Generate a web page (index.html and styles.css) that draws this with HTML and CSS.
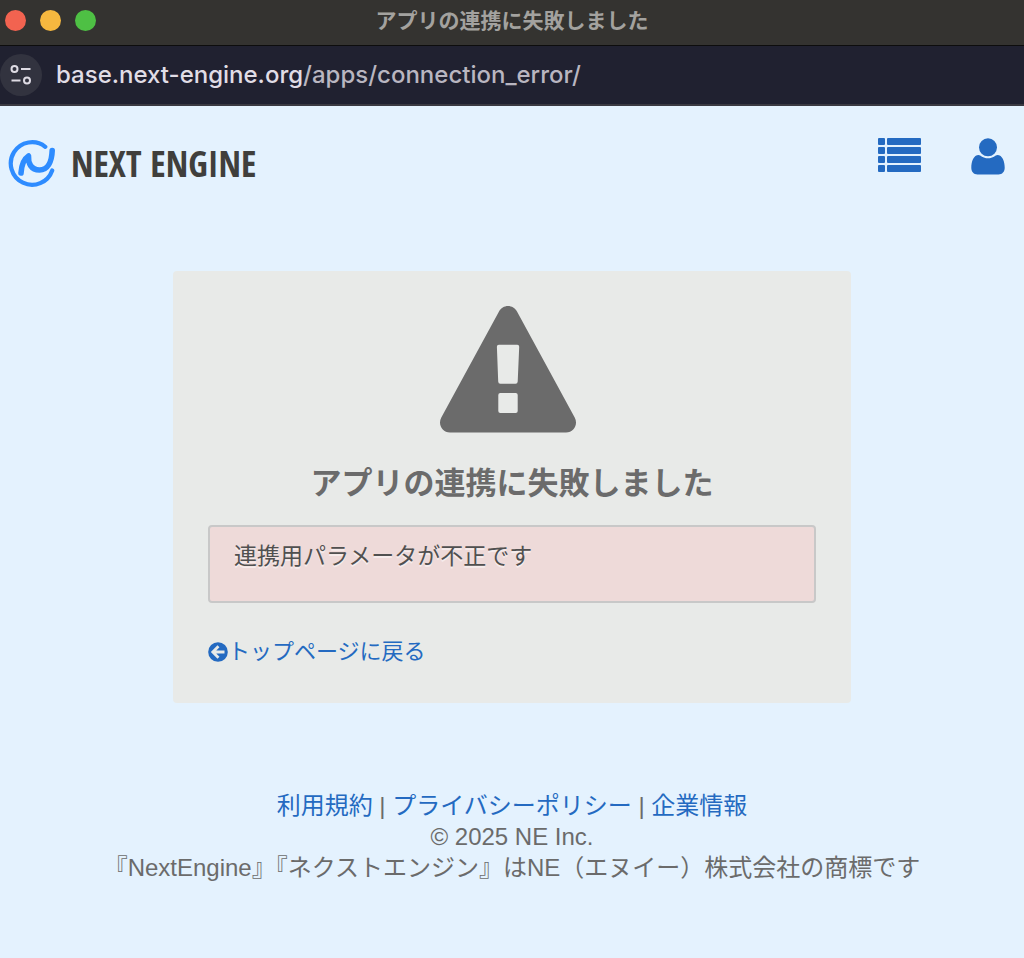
FILE: index.html
```html
<!DOCTYPE html>
<html lang="ja">
<head>
<meta charset="utf-8">
<meta name="viewport" content="width=device-width, initial-scale=1">
<title>アプリの連携に失敗しました</title>
<link rel="stylesheet" href="styles.css">
</head>
<body>
<div class="titlebar">
  <div class="lights">
    <button class="light light-close" type="button" aria-label="閉じる"></button>
    <button class="light light-min" type="button" aria-label="最小化"></button>
    <button class="light light-max" type="button" aria-label="最大化"></button>
  </div>
  <div class="window-title">アプリの連携に失敗しました</div>
</div>
<div class="urlbar">
  <button class="site-info" type="button" aria-label="サイト情報">
    <svg width="22" height="22" viewBox="0 0 22 22" fill="none" stroke="#dedbe4" stroke-width="2">
      <circle cx="4.500" cy="5" r="3"/><path d="M11 5h9.500M1.500 16.500h9"/><circle cx="17" cy="16.500" r="3"/>
    </svg>
  </button>
  <div class="url"><span class="url-host">base.next-engine.org</span>/apps/connection_error/</div>
</div>
<header class="header">
  <a class="logo" href="#">
    <svg width="48" height="48" viewBox="0 0 48 48" fill="none" stroke="#2e8cff" stroke-linecap="round">
      <path d="M37.300 6.800A21.300 21.300 0 1 0 44.200 30.500" stroke-width="4.200"/>
      <path d="M13 33C13.500 25.500 16 19 20.500 16C20 23 23 30 31.500 30C39.500 30 43.800 22 44.200 10.500" stroke-width="5.600" stroke-linejoin="round"/>
    </svg>
    <span class="logo-text">NEXT ENGINE</span>
  </a>
  <nav class="tools">
    <button class="tool" type="button" aria-label="メニュー">
      <svg width="43" height="34" viewBox="0 0 43 34" fill="#246ac1">
        <rect x="0" y="0" width="7" height="7" rx="1"/><rect x="9" y="0" width="34" height="7" rx="1"/>
        <rect x="0" y="9" width="7" height="7" rx="1"/><rect x="9" y="9" width="34" height="7" rx="1"/>
        <rect x="0" y="18" width="7" height="7" rx="1"/><rect x="9" y="18" width="34" height="7" rx="1"/>
        <rect x="0" y="27" width="7" height="7" rx="1"/><rect x="9" y="27" width="34" height="7" rx="1"/>
      </svg>
    </button>
    <button class="tool" type="button" aria-label="アカウント">
      <svg width="34" height="37" viewBox="0 0 34 37" fill="#246ac1">
        <circle cx="17" cy="9.300" r="9"/>
        <path d="M7.800 17C2.500 17 .3 23.500.3 29.800C.3 33.800 2.800 36.500 6.500 36.500H27.500C31.200 36.500 33.700 33.800 33.700 29.800C33.700 23.500 31.500 17 26.200 17C24.800 17 22 20.300 17 20.300C12 20.300 9.200 17 7.800 17Z"/>
      </svg>
    </button>
  </nav>
</header>
<main class="card">
  <svg class="warning" width="144" height="127" viewBox="0 0 144 127" fill="#6b6b6b">
    <path fill-rule="evenodd" d="M59 5.500C60.800 2.200 64.300 0 68 0S75.200 2.200 77 5.500L134.700 111.500C138.400 118.200 133.800 126.500 126 126.500H10C2.200 126.500-2.400 118.200 1.300 111.500ZM58.800 38.800Q56.800 38.800 56.900 41L58.200 75.500Q58.300 77.700 60.300 77.700H75.600Q77.600 77.700 77.700 75.500L79.200 41Q79.300 38.800 77.300 38.800ZM60.300 87Q58.300 87 58.300 89V105Q58.300 107 60.300 107H75.700Q77.700 107 77.700 105V89Q77.700 87 75.700 87Z"/>
  </svg>
  <h1 class="heading">アプリの連携に失敗しました</h1>
  <p class="alert" role="alert">連携用パラメータが不正です</p>
  <a class="back" href="#">
    <svg width="20" height="20" viewBox="0 0 20 20">
      <circle cx="10" cy="10" r="9.800" fill="#246ac1"/>
      <path d="M16.500 10H5.500M10.500 4.300L4.800 10L10.500 15.700" fill="none" stroke="#e8eae8" stroke-width="2.800"/>
    </svg>
    <span>トップページに戻る</span>
  </a>
</main>
<footer class="footer">
  <div><a href="#">利用規約</a> | <a href="#">プライバシーポリシー</a> | <a href="#">企業情報</a></div>
  <div>© 2025 NE Inc.</div>
  <div>『NextEngine』『ネクストエンジン』はNE（エヌイー）株式会社の商標です</div>
</footer>
</body>
</html>
```
FILE: styles.css
```css
* { box-sizing: border-box; }
body {
  margin: 0;
  min-height: 100vh;
  background: #e4f2fe;
  color: #6b6b6b;
  font-family: "Liberation Sans", "Noto Sans CJK JP", sans-serif;
}
button { border: 0; padding: 0; background: none; }
svg { display: block; }
a { color: #246ac1; text-decoration: none; }

.titlebar {
  display: grid;
  grid-template-columns: 1fr auto 1fr;
  align-items: center;
  height: 46px;
  padding: 0 5px 4px;
  background: #343330;
  border-bottom: 1px solid #0d0d0d;
}
.lights { display: flex; gap: 14px; }
.light { width: 21px; height: 21px; border-radius: 50%; }
.light-close { background: #f26350; }
.light-min { background: #f6b83f; }
.light-max { background: #4ec044; }
.window-title { color: #a3a29f; font-size: 21px; font-weight: 700; line-height: 30px; }

.urlbar {
  display: flex;
  align-items: center;
  gap: 14px;
  height: 60px;
  background: #202130;
  border-bottom: 2px solid #3a3941;
}
.site-info {
  display: flex;
  align-items: center;
  justify-content: center;
  width: 42px;
  height: 42px;
  border-radius: 50%;
  background: #32333f;
}
.url { color: #b9b6c0; font-family: Inter, sans-serif; font-size: 24px; font-weight: 500; line-height: 32px; }
.url-host { color: #e0dde6; }

.header {
  display: flex;
  justify-content: space-between;
  align-items: flex-start;
  padding: 32px 19px 0 8px;
}
.logo { display: flex; align-items: center; gap: 15px; padding-top: 2px; color: #403f3c; }
.logo-text {
  font-family: "Open Sans Condensed", "Liberation Sans Narrow", "DejaVu Sans Condensed", sans-serif;
  font-size: 36px;
  font-weight: 800;
  line-height: 48px;
}
.tools { display: flex; align-items: flex-start; gap: 50px; }

.card {
  max-width: 678px;
  margin: 83px auto 0;
  padding: 35px;
  background: #e8eae8;
  border-radius: 4px;
}
.warning { margin: 0 auto; }
.heading { margin: 28px 0 18px; font-size: 31px; line-height: 46px; text-align: center; }
.alert {
  margin: 0 0 33px;
  padding: 12px 24px 28px;
  border: 2px solid #c8c8c8;
  border-radius: 4px;
  background: #eedad9;
  color: #505050;
  font-size: 23px;
  line-height: 34px;
  text-shadow: 0 2px 0 rgba(255, 255, 255, .5);
}
.back { display: flex; align-items: center; font-size: 22px; line-height: 32px; }

.footer { padding: 87px 16px 32px; font-size: 24px; line-height: 31px; text-align: center; }
```
